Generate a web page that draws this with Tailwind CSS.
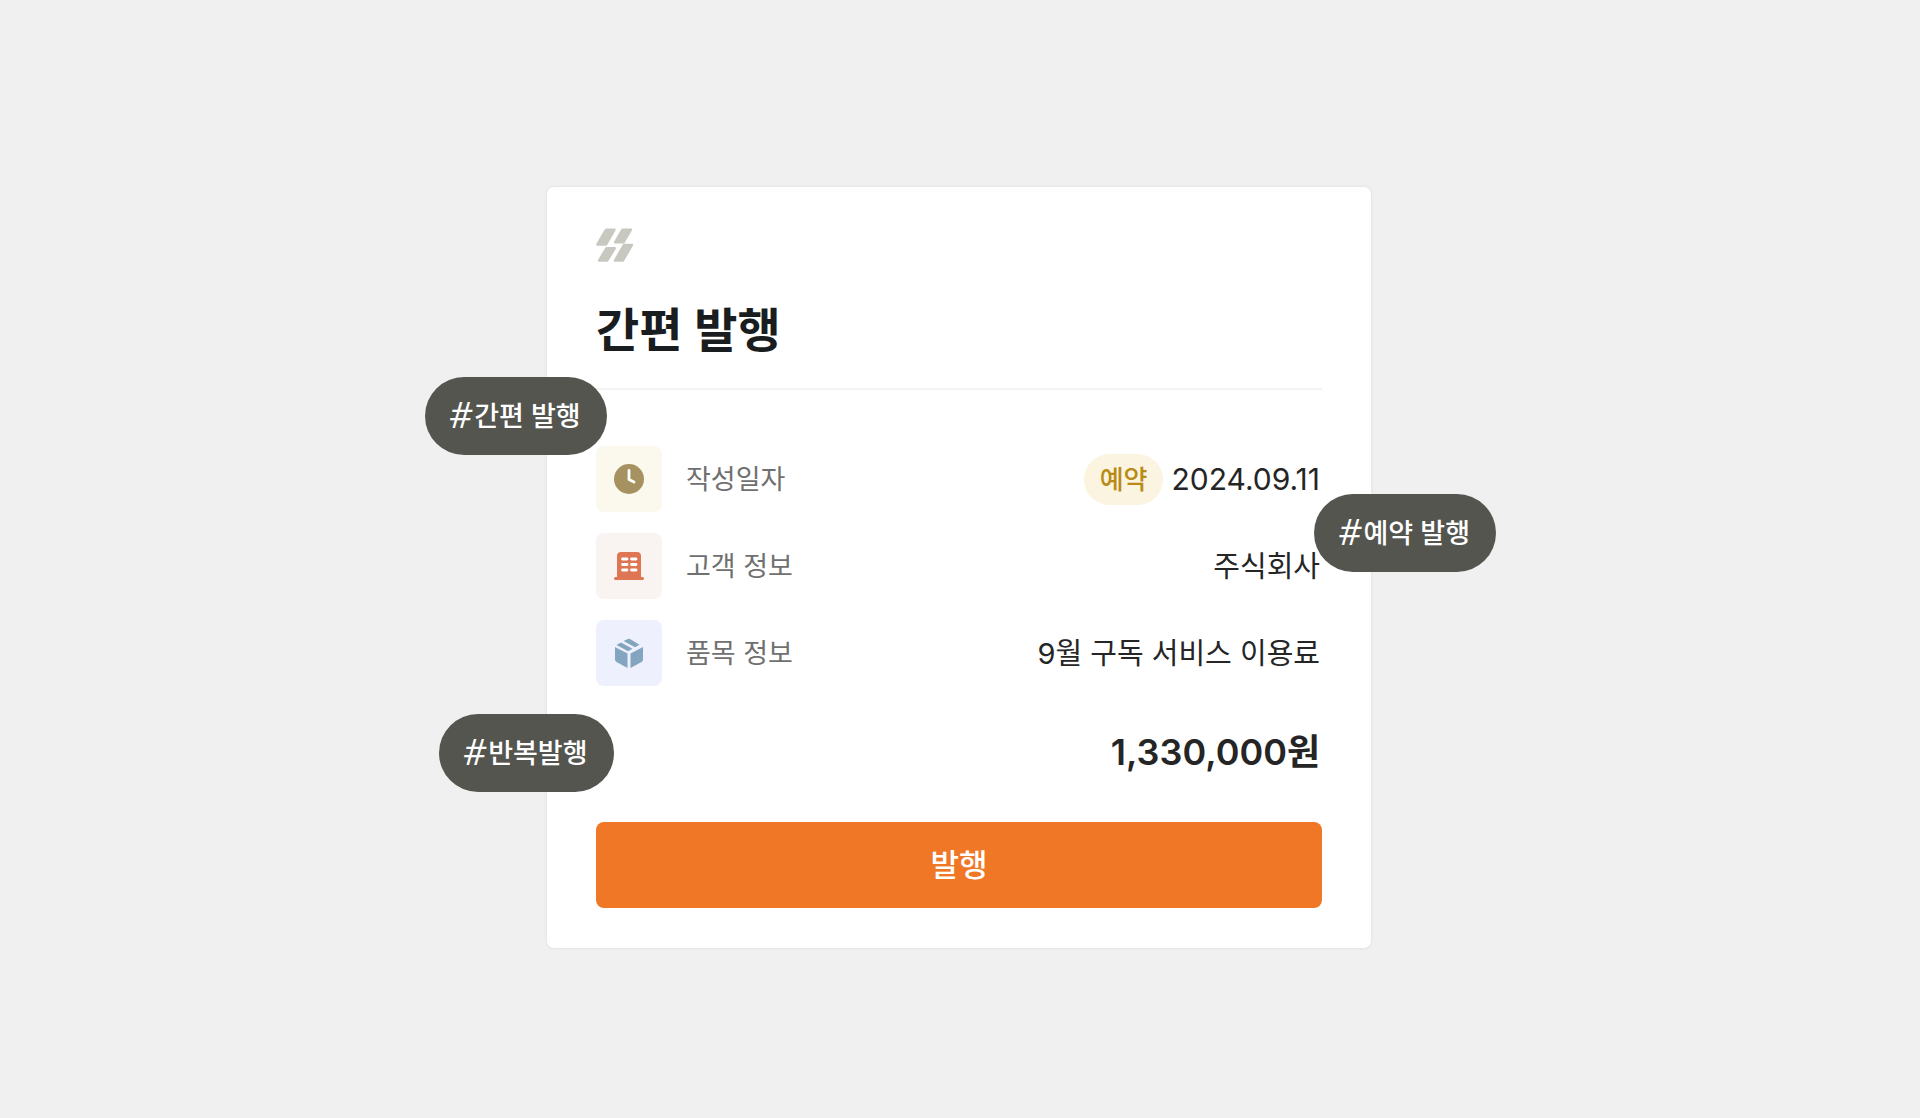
<!DOCTYPE html>
<html lang="ko">
<head>
<meta charset="utf-8">
<meta name="viewport" content="width=device-width, initial-scale=1">
<title>간편 발행</title>
<script src="https://cdn.jsdelivr.net/npm/@tailwindcss/browser@4"></script>
</head>
<body class="min-h-screen bg-[#f0f0f0] py-[186px] pr-[18px] pl-4 font-['Inter','Noto_Sans_CJK_KR',sans-serif] text-[#252525]">
<main class="relative mx-auto w-full max-w-[826px] rounded-lg border border-[#e8e8e8] bg-white px-[49px] pt-[41px] pb-10 shadow-[0_0_1px_1px_#ececec]">
  <svg class="h-[34px] w-[38px]" viewBox="0 0 38 34" fill="#c8c7c0" stroke="#c8c7c0" stroke-width="2.400" stroke-linejoin="round" aria-hidden="true">
    <path d="M10 1.700h8.500L10 16.600H1.300zM26.500 1.700h8.500L27.500 14.300h-8.500zM10.500 20.200h8.300l-7.500 12.300H3zM28 16.900h8l-9 15.600h-8z"/>
  </svg>
  <h1 class="mt-9 text-[47px] leading-[64px] font-semibold text-[#191d20]">간편 발행</h1>
  <hr class="mt-[26px] border-t-2 border-[#f3f3f3]">
  <dl class="mt-14 flex flex-col gap-[21px] pr-0.5 text-[27px] leading-[40px]">
    <div class="flex items-center">
      <span class="flex size-[66px] items-center justify-center rounded-lg bg-[#fbf8ee]">
        <svg class="size-8" viewBox="0 0 32 32" fill="none" aria-hidden="true"><circle cx="16" cy="16" r="15" fill="#a69260"/><path d="M16 7.500v9l5 2.500" stroke="#fff" stroke-width="2.800" stroke-linecap="round" stroke-linejoin="round"/></svg>
      </span>
      <dt class="ml-6 pt-0.5 text-[#707070]">작성일자</dt>
      <dd class="ml-auto flex items-center gap-2 text-[30px]"><span class="rounded-full bg-[#faf4e0] px-4 py-[6px] text-[26px] leading-[39px] font-medium text-[#b98a14]">예약</span>2024.09.11</dd>
    </div>
    <div class="flex items-center">
      <span class="flex size-[66px] items-center justify-center rounded-lg bg-[#f9f3f1]">
        <svg class="size-8" viewBox="0 0 32 32" aria-hidden="true"><path fill="#de7653" d="M4 27V6q0-4 4-4h16q4 0 4 4v21h1.500a1.500 1.500 0 0 1 0 3h-27a1.500 1.500 0 0 1 0-3z"/><path d="M9.500 9H14M18.500 9H23M9.500 14.500H14M18.500 14.500H23M9.500 20H14M18.500 20H23" stroke="#fff" stroke-width="2.800" stroke-linecap="round"/></svg>
      </span>
      <dt class="ml-6 pt-0.5 text-[#707070]">고객 정보</dt>
      <dd class="ml-auto pt-0.5 text-[29px]">주식회사</dd>
    </div>
    <div class="flex items-center">
      <span class="flex size-[66px] items-center justify-center rounded-lg bg-[#eef1fd]">
        <svg class="size-8" viewBox="0 0 32 32" fill="#83a5c0" aria-hidden="true"><path d="M2 10l12.500 6.500V31L3.500 25Q2 24 2 22.500zM30 10v12.500q0 1.500-1.500 2.500L17.500 31V16.500zM3.500 8L15 14.300l4.500-2.600L8 5.500zM10.500 4L22 10.300l4.500-2.600L17 2q-1-.6-2 0z"/></svg>
      </span>
      <dt class="ml-6 pt-0.5 text-[#707070]">품목 정보</dt>
      <dd class="ml-auto pt-0.5 text-[29px]">9월 구독 서비스 이용료</dd>
    </div>
  </dl>
  <p class="mt-[42px] pr-0.5 text-right text-[36px] leading-[48px] font-semibold">1,330,000원</p>
  <button type="button" class="mt-[46px] h-[86px] w-full rounded-lg bg-[#f07726] text-[31px] font-medium text-white">발행</button>

  <span class="absolute top-[190px] -left-[122px] flex h-[78px] items-center rounded-full bg-[#54554f] pt-0.5 pr-[26px] pl-6 text-[27px] leading-[40px] font-medium whitespace-nowrap text-white"><span class="pr-0.5 pb-1 font-['Open_Sans',sans-serif] text-[36px] italic">#</span>간편 발행</span>
  <span class="absolute top-[307px] -right-[125px] flex h-[78px] items-center rounded-full bg-[#54554f] pt-0.5 pr-[26px] pl-6 text-[27px] leading-[40px] font-medium whitespace-nowrap text-white"><span class="pr-0.5 pb-1 font-['Open_Sans',sans-serif] text-[36px] italic">#</span>예약 발행</span>
  <span class="absolute top-[527px] -left-[108px] flex h-[78px] items-center rounded-full bg-[#54554f] pt-0.5 pr-[26px] pl-6 text-[27px] leading-[40px] font-medium whitespace-nowrap text-white"><span class="pr-0.5 pb-1 font-['Open_Sans',sans-serif] text-[36px] italic">#</span>반복발행</span>
</main>
</body>
</html>
